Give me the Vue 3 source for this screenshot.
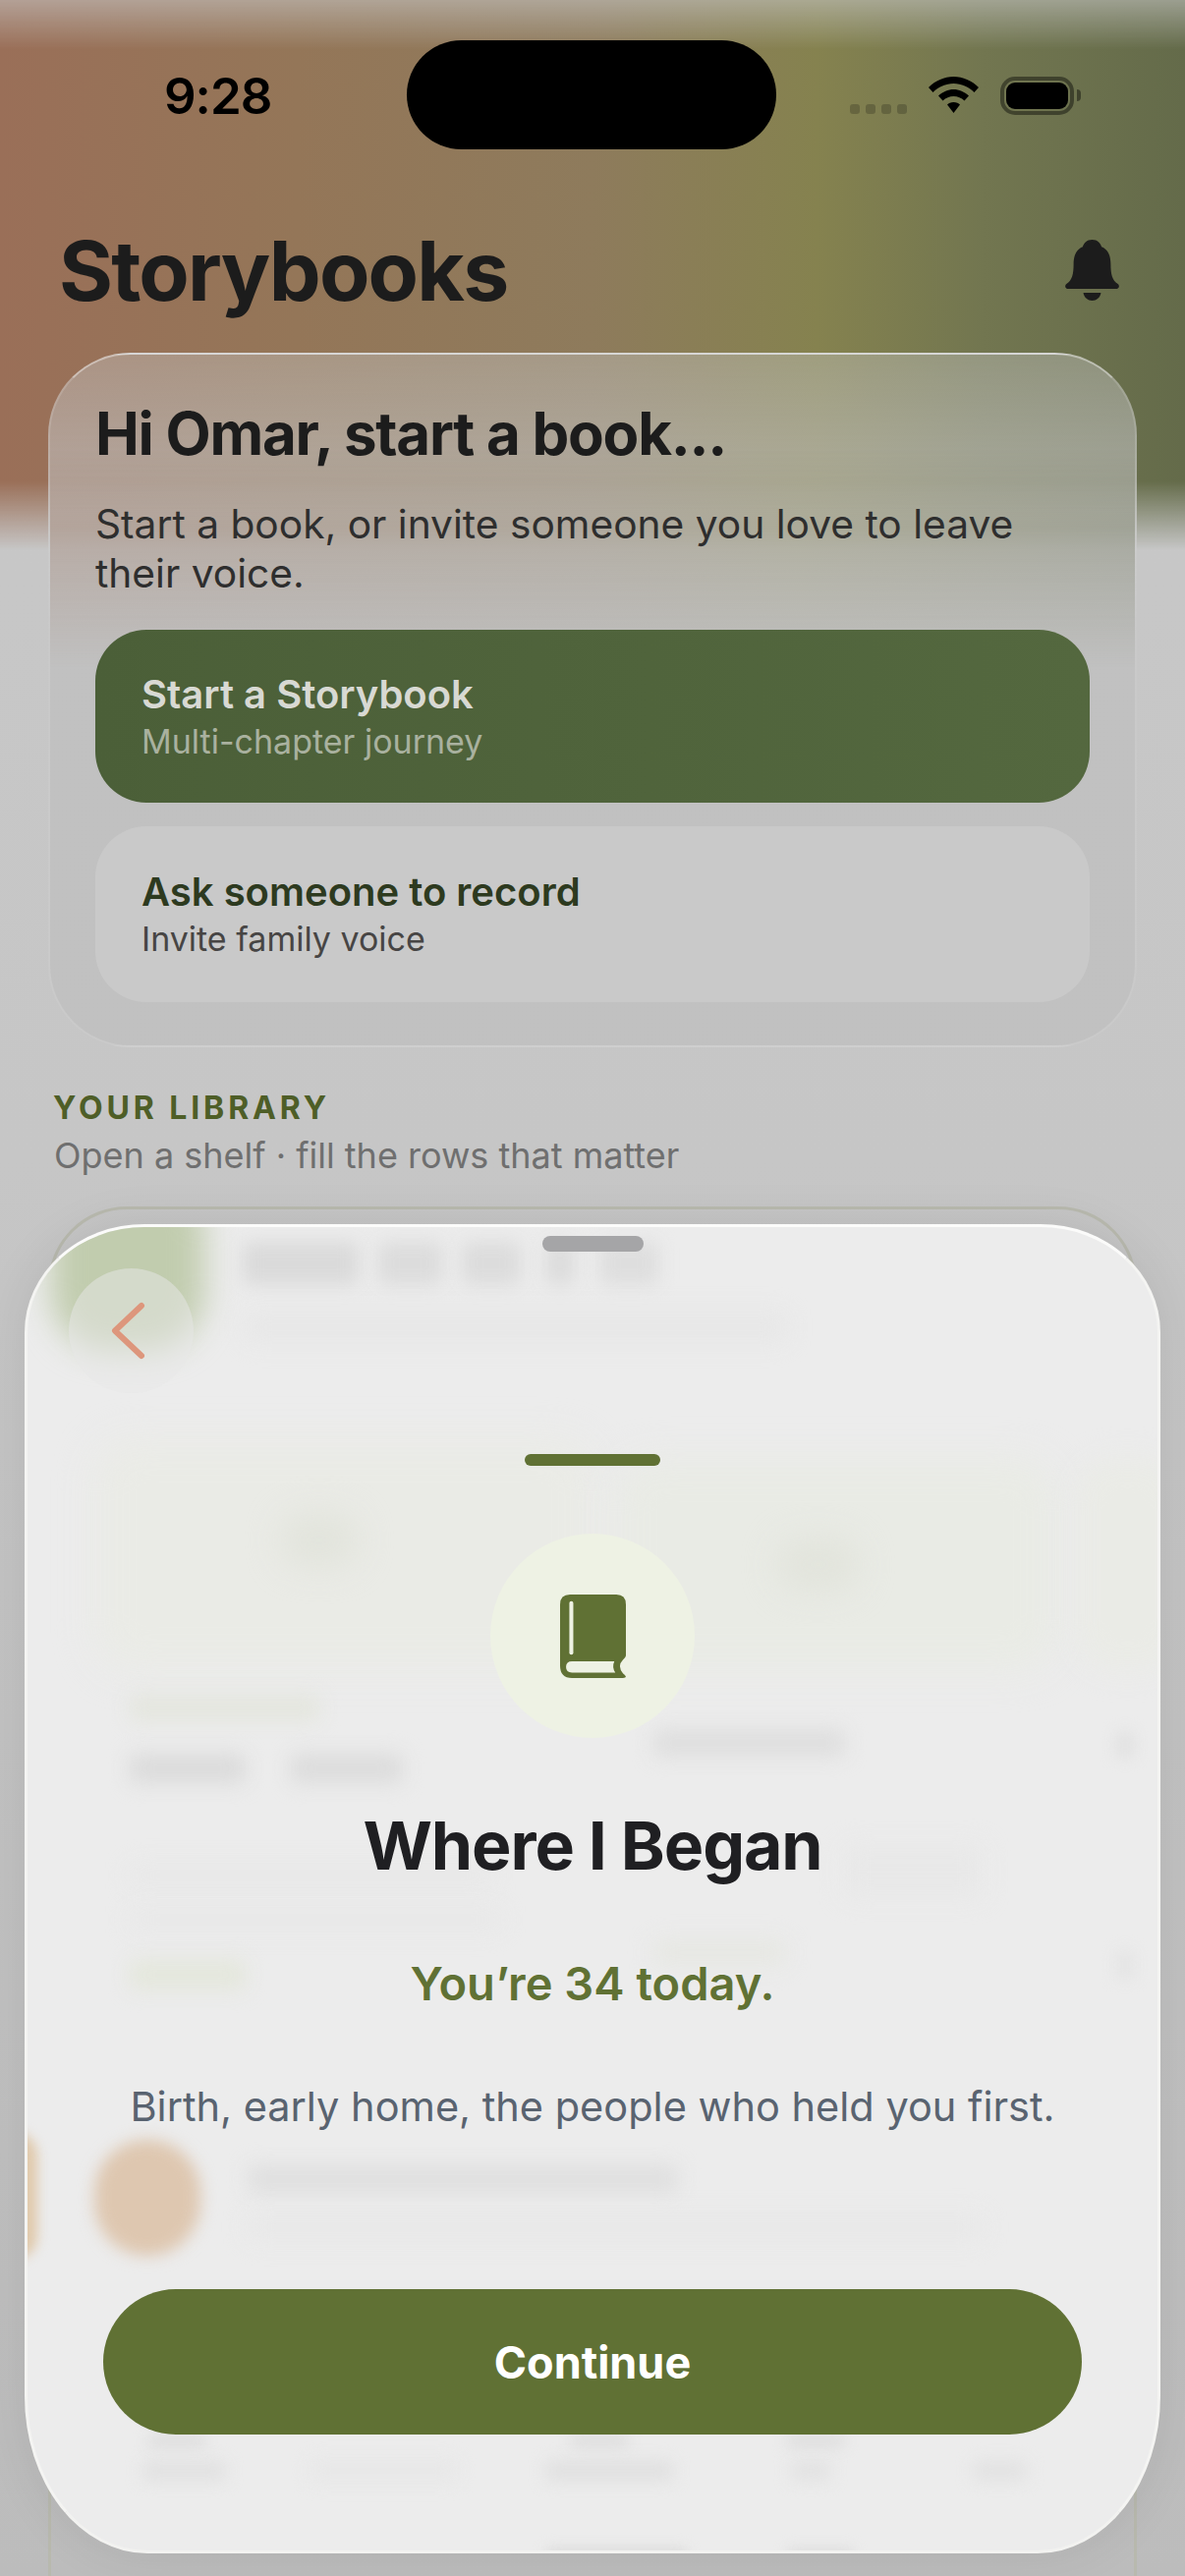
<template>
  <div class="screen">
    <div class="hero"></div>

    <div class="status">
      <span class="time">9:28</span>
      <div class="island"></div>
      <div class="status-icons">
        <div class="signal"><i></i><i></i><i></i><i></i></div>
        <svg class="wifi" width="51" height="37" viewBox="0 0 51 37">
          <path d="M25.5 0C35 0 44 4 51 11L46.5 16C41 10.5 33.5 7 25.5 7C17.5 7 10 10.5 4.5 16L0 11C7 4 16 0 25.5 0Z" />
          <path d="M25.5 13C31 13 36.5 15.5 41 19.5L36.5 24.5C33.5 21.5 29.5 20 25.5 20C21.5 20 17.5 21.5 14.5 24.5L10 19.5C14.5 15.5 20 13 25.5 13Z" />
          <path d="M25.5 26C28.5 26 30.5 27 32 28.5L25.5 37L19 28.5C20.5 27 22.5 26 25.5 26Z" />
        </svg>
        <div class="battery"><div class="battery-fill"></div></div>
        <div class="battery-nub"></div>
      </div>
    </div>

    <header class="topbar">
      <h1 class="page-title">Storybooks</h1>
      <svg class="bell" width="55" height="62" viewBox="0 0 166 187">
        <path d="M83 0C66 0 58 10 54 22C34 30 26 50 26 75C26 105 22 125 4 136C-3 142 1 151 10 151H156C165 151 169 142 162 136C144 125 140 105 140 75C140 50 132 30 112 22C108 10 100 0 83 0Z" />
        <path d="M56 163H110C108 178 96 187 83 187C70 187 58 178 56 163Z" />
      </svg>
    </header>

    <section class="start-card">
      <h2 class="start-title">Hi Omar, start a book...</h2>
      <p class="start-text">Start a book, or invite someone you love to leave their voice.</p>
      <div class="start-btn primary">
        <span class="btn-label">Start a Storybook</span>
        <span class="btn-sub">Multi-chapter journey</span>
      </div>
      <div class="start-btn secondary">
        <span class="btn-label">Ask someone to record</span>
        <span class="btn-sub">Invite family voice</span>
      </div>
    </section>

    <section class="library">
      <div class="eyebrow">YOUR LIBRARY</div>
      <div class="library-sub">Open a shelf · fill the rows that matter</div>
      <div class="shelf"></div>
    </section>

    <div class="sheet">
      <div class="ghosts">
        <div
          v-for="(g, i) in ghosts"
          :key="i"
          class="ghost"
          :style="{
            left: g[0] - 28 + 'px',
            top: g[1] - 1249 + 'px',
            width: g[2] - g[0] + 'px',
            height: g[3] - g[1] + 'px',
            background: g[4],
            filter: 'blur(' + g[5] + 'px)',
            borderRadius: (g[6] || 6) + 'px'
          }"
        ></div>
      </div>

      <div class="grabber"></div>
      <button class="back-btn" aria-label="Back">
        <svg width="37" height="59" viewBox="0 0 37 59">
          <path d="M32 4L5 29.500L32 55" />
        </svg>
      </button>

      <div class="accent-bar"></div>
      <div class="icon-circle">
        <svg width="67" height="85" viewBox="0 0 199 252">
          <path class="book-cover" d="M30 0H170Q199 0 199 30V185Q199 190 190 197Q172 215 190 238Q199 245 199 248Q199 252 190 252H36Q0 252 0 215V30Q0 0 30 0Z" />
          <path class="book-page" d="M36 202H164Q156 220 167 236H36Q18 236 18 219Q18 202 36 202Z" />
          <rect class="book-page" x="28" y="20" width="12" height="162" rx="6" />
        </svg>
      </div>
      <h2 class="sheet-title">Where I Began</h2>
      <p class="sheet-age">You’re 34 today.</p>
      <p class="sheet-text">Birth, early home, the people who held you first.</p>
      <button class="continue-btn">Continue</button>
    </div>
  </div>
</template>

<script setup>
// what shows through the frosted sheet: [x1, y1, x2, y2, colour, blur, radius]
const ghosts = [
  [52, 1195, 208, 1375, '#c1ccae', 16, 60],
  [95, 1465, 605, 1700, '#eaebe6', 18, 40],
  [625, 1485, 1075, 1700, '#e9ebe5', 18, 40],
  [1095, 1485, 1200, 1700, '#eaebe6', 14, 40],
  [285, 1540, 365, 1595, '#e2e4dc', 16, 30],
  [790, 1565, 875, 1620, '#e2e4dc', 16, 30],
  [247, 1264, 365, 1308, '#dadada', 9],
  [385, 1264, 450, 1308, '#dcdcdc', 9],
  [470, 1264, 530, 1308, '#dcdcdc', 9],
  [555, 1264, 585, 1308, '#dcdcdc', 9],
  [610, 1264, 670, 1308, '#dedede', 9],
  [250, 1336, 800, 1366, '#e7e7e7', 11],
  [132, 1725, 325, 1752, '#e4e6de', 10],
  [132, 1785, 250, 1815, '#dbdbdb', 10],
  [296, 1785, 410, 1815, '#dcdcdc', 10],
  [665, 1760, 860, 1788, '#dedede', 10],
  [1135, 1762, 1155, 1790, '#e2e2e2', 7],
  [132, 1898, 500, 1920, '#e8e8e8', 11],
  [132, 1943, 510, 1965, '#e8e8e8', 11],
  [860, 1880, 1000, 1930, '#e8e8e8', 12],
  [132, 1995, 250, 2025, '#e4e7dc', 10],
  [665, 1975, 800, 2000, '#e6e7e2', 11],
  [1135, 1985, 1155, 2015, '#e5e5e5', 7],
  [-10, 2170, 38, 2300, '#e0c9ab', 6, 40],
  [96, 2178, 204, 2296, '#dec7b0', 8, 60],
  [252, 2204, 690, 2232, '#dfdfdf', 10],
  [252, 2254, 1000, 2280, '#e8e8e8', 11],
  [145, 2505, 230, 2525, '#e1e1e1', 8],
  [315, 2505, 465, 2525, '#e7e7e7', 9],
  [555, 2505, 685, 2525, '#e0e0e0', 8],
  [805, 2505, 845, 2525, '#e2e2e2', 8],
  [990, 2505, 1045, 2525, '#e2e2e2', 8],
  [150, 2478, 210, 2492, '#dedede', 7],
  [580, 2478, 640, 2492, '#dedede', 7],
  [800, 2478, 860, 2492, '#dedede', 7],
  [555, 2592, 700, 2606, '#dedede', 6],
  [800, 2592, 870, 2606, '#e0e0e0', 6]
]
</script>

<style>
html,
body {
  margin: 0;
  background: #c4c4c4;
}
</style>

<style scoped>
* {
  box-sizing: border-box;
}

.screen {
  position: relative;
  width: 1206px;
  height: 2622px;
  overflow: hidden;
  font-family: Inter, "Liberation Sans", sans-serif;
  background: linear-gradient(180deg, #c8c8c8 0%, #c6c6c6 45%, #bcbcbc 100%);
}

.hero {
  position: absolute;
  top: 0;
  left: 0;
  right: 0;
  height: 560px;
  background: linear-gradient(90deg, #9a6f58 0%, #947658 25%, #8e7b5c 50%, #85824f 69%, #727650 83%, #646b4a 100%);
  -webkit-mask-image: linear-gradient(180deg, rgba(0, 0, 0, 0.45) 0, #000 50px, #000 490px, transparent 560px);
  mask-image: linear-gradient(180deg, rgba(0, 0, 0, 0.45) 0, #000 50px, #000 490px, transparent 560px);
}

.status {
  position: relative;
  display: grid;
  grid-template-columns: 414px 376px 1fr;
  height: 152px;
  padding-top: 41px;
}

.time {
  align-self: center;
  padding: 2px 0 0 167px;
  font-size: 51px;
  font-weight: 600;
  color: #000;
  letter-spacing: -1px;
}

.island {
  height: 111px;
  border-radius: 56px;
  background: #000;
}

.status-icons {
  display: flex;
  align-items: flex-start;
  padding: 37px 0 0 75px;
}

.signal {
  display: flex;
  gap: 6px;
  margin-top: 28px;
}

.signal i {
  width: 10px;
  height: 10px;
  border-radius: 3px;
  background: rgba(0, 0, 0, 0.2);
}

.wifi {
  margin-left: 22px;
  fill: #000;
}

.battery {
  width: 75px;
  height: 39px;
  margin-left: 22px;
  padding: 2px;
  border: 4px solid rgba(0, 0, 0, 0.42);
  border-radius: 15px;
}

.battery-fill {
  width: 100%;
  height: 100%;
  border-radius: 9px;
  background: #000;
}

.battery-nub {
  width: 4px;
  height: 12px;
  margin: 13px 0 0 3px;
  border-radius: 0 4px 4px 0;
  background: rgba(0, 0, 0, 0.42);
}

.topbar {
  position: relative;
  display: flex;
  align-items: center;
  justify-content: space-between;
  height: 96px;
  margin-top: 75px;
  padding: 0 67px 0 60px;
}

.page-title {
  margin: 0;
  font-size: 84px;
  font-weight: 700;
  letter-spacing: -1.8px;
  color: #1c1c1c;
}

.bell {
  fill: #1c1c1c;
}

.start-card {
  position: relative;
  isolation: isolate;
  display: flex;
  flex-direction: column;
  height: 707px;
  margin: 36px 49px 0;
  padding: 45px 46px 0;
  border: 2px solid rgba(255, 255, 255, 0.14);
  border-top-color: rgba(255, 255, 255, 0.4);
  border-radius: 84px;
  background: linear-gradient(180deg, rgba(200, 200, 200, 0.4) 0%, rgba(192, 192, 192, 0.92) 40%);
}

/* the blurred hero bleeding down behind the glass */
.start-card::before {
  content: "";
  position: absolute;
  z-index: -1;
  top: 0;
  left: 0;
  right: 0;
  height: 320px;
  border-radius: 84px 84px 0 0;
  background: linear-gradient(90deg, #9a6f58, #8e7b5c 50%, #85824f 69%, #646b4a);
  opacity: 0.3;
  -webkit-mask-image: linear-gradient(180deg, transparent 30%, #000 55%, transparent 100%);
  mask-image: linear-gradient(180deg, transparent 30%, #000 55%, transparent 100%);
}

.start-title {
  margin: 0;
  font-size: 60px;
  line-height: 70px;
  font-weight: 700;
  letter-spacing: -1.25px;
  color: #1c1c1c;
}

.start-text {
  margin: 33px 0 0;
  font-size: 40.7px;
  line-height: 50px;
  color: #2e2e2e;
}

.start-btn {
  display: flex;
  flex-direction: column;
  justify-content: center;
  gap: 4px;
  padding-left: 47px;
  border-radius: 52px;
}

.primary {
  height: 176px;
  margin-top: 32px;
  background: linear-gradient(90deg, #4b5f38, #54683f);
}

.secondary {
  height: 179px;
  margin-top: 24px;
  padding-bottom: 2px;
  background: #c9c9c9;
}

.btn-label {
  font-size: 40px;
  line-height: 48px;
  font-weight: 600;
}

.btn-sub {
  font-size: 34px;
  line-height: 40px;
}

.primary .btn-label {
  color: #d8d9d3;
}

.primary .btn-sub {
  color: #a9b19f;
}

.secondary .btn-label {
  color: #2d3a1f;
}

.secondary .btn-sub {
  color: #474544;
}

.library {
  position: relative;
  padding: 42px 0 0 54px;
}

.eyebrow {
  font-size: 32px;
  line-height: 40px;
  font-weight: 700;
  letter-spacing: 3.9px;
  color: #4e5e27;
}

.library-sub {
  margin-top: 6px;
  padding-left: 1px;
  font-size: 36px;
  line-height: 44px;
  color: #6f6f6f;
}

.shelf {
  height: 1600px;
  margin: 30px 49px 0 -5px;
  border: 3px solid #b8b9ae;
  border-radius: 80px;
}

/* bottom sheet */
.sheet {
  position: absolute;
  left: 25px;
  top: 1246px;
  width: 1156px;
  height: 1353px;
  display: flex;
  flex-direction: column;
  align-items: center;
  overflow: hidden;
  border: 3px solid;
  border-color: #fbfbfa #f4f4f2 #f2f2f0;
  border-radius: 122px 122px 125px 125px / 110px 110px 160px 160px;
  background: #ececec;
  box-shadow: 0 0 50px rgba(0, 0, 0, 0.08);
}

.ghosts {
  position: absolute;
  inset: 0;
}

.ghost {
  position: absolute;
}

.grabber {
  position: relative;
  flex: none;
  width: 103px;
  height: 16px;
  margin-top: 9px;
  border-radius: 8px;
  background: #a5a5a7;
}

.back-btn {
  position: absolute;
  left: 42px;
  top: 42px;
  display: flex;
  align-items: center;
  justify-content: center;
  width: 127px;
  height: 127px;
  padding: 0 6px 0 0;
  border: none;
  border-radius: 50%;
  background: rgba(232, 232, 232, 0.5);
}

.back-btn path {
  fill: none;
  stroke: #dd967c;
  stroke-width: 6;
  stroke-linecap: round;
  stroke-linejoin: round;
}

.accent-bar {
  position: relative;
  flex: none;
  width: 138px;
  height: 12px;
  margin-top: 206px;
  border-radius: 6px;
  background: #607134;
}

.icon-circle {
  position: relative;
  flex: none;
  display: flex;
  align-items: center;
  justify-content: center;
  width: 208px;
  height: 208px;
  margin-top: 69px;
  border-radius: 50%;
  background: #eef2e4;
}

.book-cover {
  fill: #607134;
}

.book-page {
  fill: #eef2e4;
}

.sheet-title {
  position: relative;
  margin: 69px 0 0;
  font-size: 68px;
  line-height: 80px;
  font-weight: 700;
  letter-spacing: -1.1px;
  color: #1f1f22;
}

.sheet-age {
  position: relative;
  margin: 73px 0 0;
  font-size: 47px;
  line-height: 56px;
  font-weight: 600;
  color: #607134;
}

.sheet-text {
  position: relative;
  margin: 69px 0 0;
  font-size: 41.5px;
  line-height: 56px;
  color: #596370;
}

.continue-btn {
  position: relative;
  flex: none;
  width: 996px;
  height: 148px;
  margin-top: 158px;
  border: none;
  border-radius: 75px;
  background: #607134;
  font-family: inherit;
  font-size: 45px;
  font-weight: 700;
  color: #fff;
}
</style>
